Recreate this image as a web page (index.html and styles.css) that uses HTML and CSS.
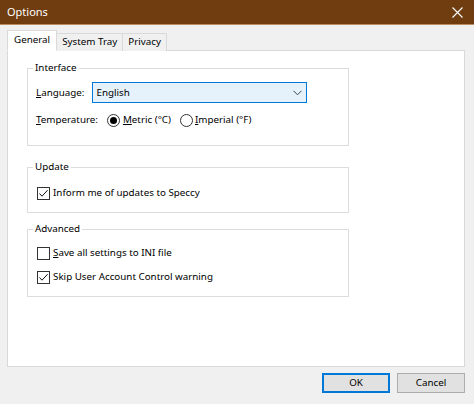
FILE: index.html
```html
<!DOCTYPE html>
<html>
<head>
<meta charset="utf-8">
<title>Options</title>
<link rel="stylesheet" href="styles.css">
</head>
<body>
<div class="window">
  <header class="titlebar">
    <span class="title">Options</span>
    <svg class="close" width="11" height="11" viewBox="0 0 11 11"><path d="M0.5 0.5 L10.5 10.5 M10.5 0.5 L0.5 10.5" stroke="#fff" stroke-width="1.1" fill="none"/></svg>
  </header>
  <main class="content">
    <nav class="tabs">
      <div class="tab active">General</div>
      <div class="tab">System Tray</div>
      <div class="tab">Privacy</div>
    </nav>
    <section class="panel">
      <fieldset class="group g-interface">
        <legend>Interface</legend>
        <div class="row">
          <span class="lbl"><u>L</u>anguage:</span>
          <div class="select">
            <span>English</span>
            <svg width="9" height="6" viewBox="0 0 9 6"><path d="M0.5 0.8 L4.5 4.8 L8.5 0.8" stroke="#444" stroke-width="1" fill="none"/></svg>
          </div>
        </div>
        <div class="row temp">
          <span class="lbl"><u>T</u>emperature:</span>
          <span class="radio checked"></span>
          <span class="opt"><u>M</u>etric (°C)</span>
          <span class="radio second"></span>
          <span class="opt"><u>I</u>mperial (°F)</span>
        </div>
      </fieldset>

      <fieldset class="group g-update">
        <legend>Update</legend>
        <div class="check-row">
          <span class="checkbox"><svg width="11" height="11" viewBox="0 0 11 11"><path d="M1.5 5.5 L4 8.2 L9.6 2.2" stroke="#111" stroke-width="1" fill="none"/></svg></span>
          <span>Inform me of updates to Speccy</span>
        </div>
      </fieldset>

      <fieldset class="group g-advanced">
        <legend>Advanced</legend>
        <div class="check-row">
          <span class="checkbox"></span>
          <span><u>S</u>ave all settings to INI file</span>
        </div>
        <div class="check-row">
          <span class="checkbox"><svg width="11" height="11" viewBox="0 0 11 11"><path d="M1.5 5.5 L4 8.2 L9.6 2.2" stroke="#111" stroke-width="1" fill="none"/></svg></span>
          <span>Skip User Account Control warning</span>
        </div>
      </fieldset>
    </section>
    <footer class="buttons">
      <button class="btn default">OK</button>
      <button class="btn">Cancel</button>
    </footer>
  </main>
</div>
</body>
</html>
```

FILE: styles.css
```css
* { box-sizing: border-box; }
html, body {
  margin: 0;
  padding: 0;
  width: 474px;
  height: 404px;
  overflow: hidden;
  background: #f0f0f0;
}
body {
  font-family: "Noto Sans", "Open Sans", sans-serif;
  font-size: 9.8px;
  line-height: 16px;
  color: #000;
}
u { text-underline-offset: 1px; }
.window {
  width: 474px;
  height: 404px;
  display: flex;
  flex-direction: column;
}
.titlebar {
  height: 25px;
  background: #703d10;
  border-bottom: 1px solid #b98d60;
  display: flex;
  align-items: center;
  justify-content: space-between;
  padding: 0 11px 0 7px;
  color: #fff;
  flex: none;
}
.title { font-size: 11px; }
.content {
  flex: 1;
  padding: 6px 9px 0 7px;
  display: flex;
  flex-direction: column;
}
.tabs {
  display: flex;
  align-items: flex-end;
  height: 20px;
  margin-bottom: -1px;
  position: relative;
  z-index: 1;
}
.tab {
  height: 18px;
  line-height: 16px;
  padding: 0 5px;
  background: #f0f0f0;
  border: 1px solid #d9d9d9;
  border-bottom: none;
  margin-left: -1px;
  white-space: nowrap;
}
.tab.active {
  height: 21px;
  margin-left: 0;
  padding: 1px 6px 0;
  background: #fff;
  border-bottom: 1px solid #fff;
}
.tab.active + .tab { margin-left: 0; border-left: none; }
.panel {
  height: 317px;
  background: #fff;
  border: 1px solid #d9d9d9;
  padding: 9px 0 0 19px;
}
.group {
  width: 322px;
  margin: 0;
  border: 1px solid #dcdcdc;
  padding: 0 0 0 9px;
  min-width: 0;
}
.group legend {
  padding: 0 2px;
  margin-left: -4px;
  line-height: 16px;
}
.g-interface { padding-top: 6px; padding-bottom: 17px; }
.g-update { margin-top: 13px; padding-top: 10px; padding-bottom: 11px; }
.g-advanced { margin-top: 8px; padding-top: 8px; padding-bottom: 11px; }
.row {
  display: flex;
  align-items: center;
}
.row .lbl { margin-left: -1px; }
.select {
  margin-left: 8px;
  width: 215px;
  height: 21px;
  border: 1px solid #0078d7;
  background: #e5f1fb;
  display: flex;
  align-items: center;
  justify-content: space-between;
  padding: 0 4px 0 3px;
}
.temp { margin-top: 9px; height: 16px; }
.radio {
  width: 13px;
  height: 13px;
  border: 1px solid #333;
  border-radius: 50%;
  background: #fff;
  margin-left: 9px;
  margin-right: 3px;
  display: flex;
  align-items: center;
  justify-content: center;
  flex: none;
}
.radio.checked::after {
  content: "";
  width: 7px;
  height: 7px;
  border-radius: 50%;
  background: #000;
}
.radio.second { margin-left: 9px; margin-right: 2px; }
.check-row {
  display: flex;
  align-items: center;
  height: 16px;
}
.check-row + .check-row { margin-top: 8px; }
.checkbox {
  width: 13px;
  height: 13px;
  border: 1px solid #333;
  background: #fff;
  margin-right: 3px;
  display: flex;
  align-items: center;
  justify-content: center;
  flex: none;
}
.buttons {
  display: flex;
  justify-content: flex-end;
  gap: 7px;
  margin-top: 6px;
}
.btn {
  width: 68px;
  height: 20px;
  font-family: inherit;
  font-size: 9.8px;
  line-height: 16px;
  padding: 0;
  color: #000;
  background: #e1e1e1;
  border: 1px solid #adadad;
}
.btn.default {
  border: 2px solid #0078d7;
}
```
